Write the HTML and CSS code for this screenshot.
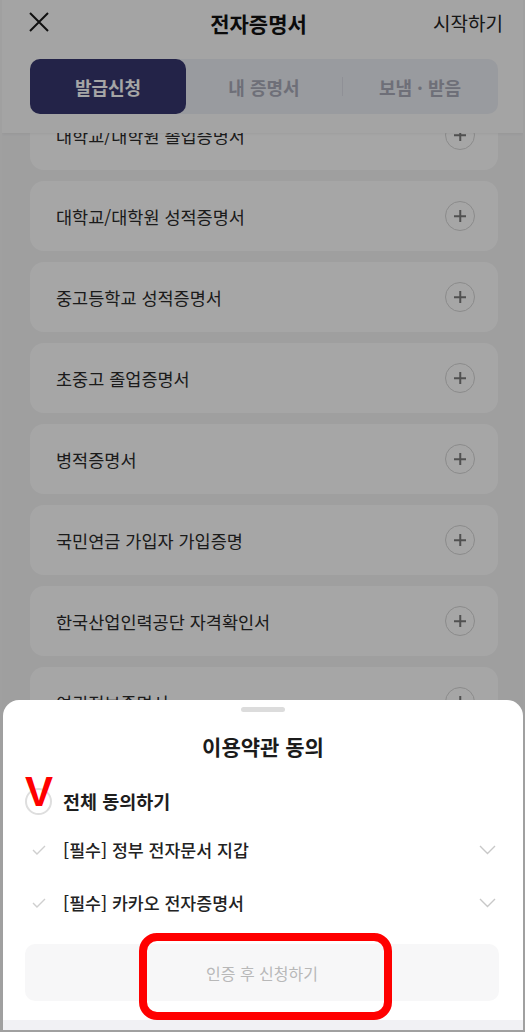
FILE: index.html
```html
<!DOCTYPE html>
<html lang="ko">
<head>
    <meta charset="UTF-8">
    <meta name="viewport" content="width=device-width, initial-scale=1.0">
    <title>전자증명서</title>
    <link rel="stylesheet" href="styles.css">
</head>
<body>
    <div class="phone">
        <div class="top">
            <div class="header">
                <svg class="close" width="22" height="22" viewBox="0 0 22 22">
                    <path d="M2 2 L20 20 M20 2 L2 20" stroke="#1a1a1a" stroke-width="2" fill="none"/>
                </svg>
                <h1>전자증명서</h1>
                <span class="start">시작하기</span>
            </div>
            <div class="tabs">
                <div class="tab active">발급신청</div>
                <div class="tab">내 증명서</div>
                <div class="tab sep">보냄 · 받음</div>
            </div>
        </div>

        <div class="list">
            <div class="list-inner">
                <div class="card"><span>대학교/대학원 졸업증명서</span><i class="plus"></i></div>
                <div class="card"><span>대학교/대학원 성적증명서</span><i class="plus"></i></div>
                <div class="card"><span>중고등학교 성적증명서</span><i class="plus"></i></div>
                <div class="card"><span>초중고 졸업증명서</span><i class="plus"></i></div>
                <div class="card"><span>병적증명서</span><i class="plus"></i></div>
                <div class="card"><span>국민연금 가입자 가입증명</span><i class="plus"></i></div>
                <div class="card"><span>한국산업인력공단 자격확인서</span><i class="plus"></i></div>
                <div class="card"><span>여권정보증명서</span><i class="plus"></i></div>
            </div>
        </div>

        <div class="dim"></div>

        <div class="sheet">
            <div class="handle"></div>
            <h2>이용약관 동의</h2>
            <div class="agree-all">
                <span class="radio"></span>
                <span>전체 동의하기</span>
            </div>
            <div class="agree-row">
                <svg class="check" width="14" height="10" viewBox="0 0 14 10">
                    <path d="M1 5 L5 9 L13 1" stroke="#cfcfcf" stroke-width="1.4" fill="none"/>
                </svg>
                <span class="label">[필수] 정부 전자문서 지갑</span>
                <svg class="chevron" width="17" height="10" viewBox="0 0 17 10">
                    <path d="M1 1 L8.5 8.5 L16 1" stroke="#c8c8c8" stroke-width="1.4" fill="none"/>
                </svg>
            </div>
            <div class="agree-row">
                <svg class="check" width="14" height="10" viewBox="0 0 14 10">
                    <path d="M1 5 L5 9 L13 1" stroke="#cfcfcf" stroke-width="1.4" fill="none"/>
                </svg>
                <span class="label">[필수] 카카오 전자증명서</span>
                <svg class="chevron" width="17" height="10" viewBox="0 0 17 10">
                    <path d="M1 1 L8.5 8.5 L16 1" stroke="#c8c8c8" stroke-width="1.4" fill="none"/>
                </svg>
            </div>
            <button class="submit" disabled>인증 후 신청하기</button>
            <div class="sheet-bottom"></div>
        </div>

        <!-- red annotations -->
        <span class="mark-v">V</span>
        <div class="mark-box"></div>
    </div>
</body>
</html>
```

FILE: styles.css
```css
body {
    margin: 0;
    font-family: "Noto Sans CJK KR", "Noto Sans", sans-serif;
    background: #fff;
}
.phone {
    position: relative;
    width: 525px;
    height: 1032px;
    box-sizing: border-box;
    border: 2px solid #a0a0a0;
    border-top: none;
    background: #f4f4f5;
    overflow: hidden;
}
.top {
    position: relative;
    z-index: 1;
    background: #fcfcfc;
    padding-bottom: 19px;
    box-shadow: 0 1px 3px rgba(0,0,0,0.06);
}
.header {
    height: 45px;
    display: grid;
    grid-template-columns: 1fr auto 1fr;
    align-items: center;
    padding: 0 20px 0 26px;
}
.close {
    display: block;
    margin-top: -2px;
}
.header h1 {
    margin: 0 14px 0 0;
    font-size: 21px;
    font-weight: 700;
    color: #111;
}
.start {
    justify-self: end;
    font-size: 19px;
    color: #222;
}
.tabs {
    display: flex;
    margin: 14px 25px 0 28px;
    height: 55px;
    background: #eceef4;
    border-radius: 10px;
}
.tab {
    flex: 1;
    display: flex;
    align-items: center;
    justify-content: center;
    font-size: 18px;
    font-weight: 700;
    color: #a9abb9;
    position: relative;
}
.tab.active {
    background: #36376f;
    color: #fff;
    border-radius: 10px;
}
.tab.sep::before {
    content: "";
    position: absolute;
    left: 0;
    top: 18px;
    bottom: 18px;
    width: 1px;
    background: #dcdee6;
}
.list {
    height: 900px;
    overflow: hidden;
}
.list-inner {
    margin-top: -33px;
    padding: 0 25px 0 28px;
}
.card {
    height: 70px;
    margin-bottom: 11px;
    background: #fff;
    border-radius: 14px;
    display: flex;
    align-items: center;
    justify-content: space-between;
    padding: 0 23px 0 26px;
    font-size: 17.5px;
    color: #2a2a2a;
}
.plus {
    width: 28px;
    height: 28px;
    border: 1.5px solid #d6d6d6;
    border-radius: 50%;
    position: relative;
}
.plus::before, .plus::after {
    content: "";
    position: absolute;
    background: #7d7d7d;
    left: 50%;
    top: 50%;
}
.plus::before {
    width: 12px;
    height: 1.5px;
    transform: translate(-50%, -50%);
}
.plus::after {
    width: 1.5px;
    height: 12px;
    transform: translate(-50%, -50%);
}
.dim {
    position: absolute;
    inset: 0;
    z-index: 2;
    background: rgba(0,0,0,0.35);
}
.sheet {
    position: absolute;
    left: 1px;
    right: 0;
    bottom: 0;
    z-index: 3;
    background: #fff;
    border-radius: 16px 16px 0 0;
    padding-top: 7px;
}
.handle {
    width: 44px;
    height: 5px;
    border-radius: 3px;
    background: #dcdcdc;
    margin: 0 auto;
}
.sheet h2 {
    margin: 20px 0 0;
    text-align: center;
    font-size: 21px;
    line-height: 28px;
    font-weight: 700;
    color: #1b1b1b;
}
.agree-all {
    display: flex;
    align-items: center;
    height: 40px;
    margin-top: 21px;
    padding-left: 22px;
    font-size: 18.5px;
    font-weight: 700;
    color: #1e1e1e;
}
.radio {
    width: 23px;
    height: 23px;
    border: 2px solid #dedede;
    border-radius: 50%;
    margin-right: 11px;
}
.agree-row {
    display: flex;
    align-items: center;
    height: 53px;
    padding: 0 27px 0 29px;
}
.agree-all + .agree-row {
    margin-top: 2px;
}
.check {
    margin-right: 17px;
}
.label {
    flex: 1;
    font-size: 17.3px;
    font-weight: 500;
    color: #222;
}
.submit {
    display: block;
    width: calc(100% - 46px);
    height: 57px;
    margin: 15px 0 0 22px;
    border: none;
    border-radius: 10px;
    background: #f7f7f8;
    color: #b8b8b8;
    font-family: inherit;
    font-size: 16px;
}
.sheet-bottom {
    height: 10px;
    margin-top: 19px;
    background: #f1f1f4;
}
.mark-v {
    position: absolute;
    z-index: 4;
    left: 23px;
    top: 768px;
    font-family: "Liberation Sans", sans-serif;
    font-weight: 700;
    font-size: 42px;
    line-height: 48px;
    color: #ff0000;
}
.mark-box {
    position: absolute;
    z-index: 4;
    left: 137px;
    top: 933px;
    width: 237px;
    height: 71px;
    border: 8px solid #ff0000;
    border-radius: 18px;
}
```
